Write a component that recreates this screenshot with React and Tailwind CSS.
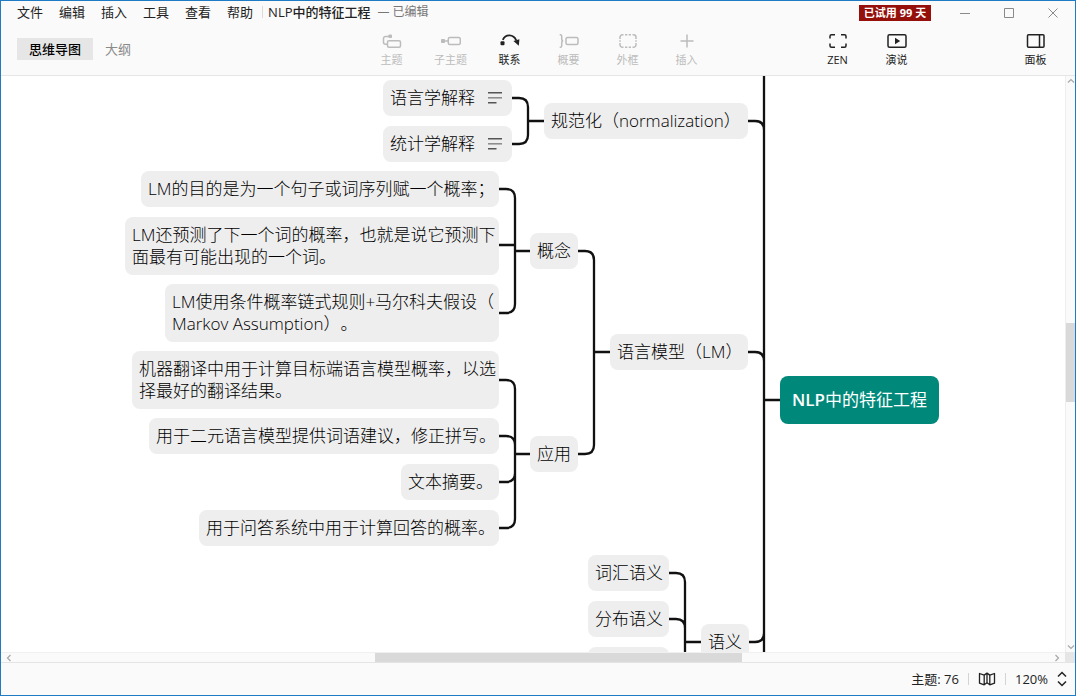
import React from 'react';
import clsx from 'clsx';

const menus = ['文件', '编辑', '插入', '工具', '查看', '帮助'];

const nodes = [
    { x: 382, y: 4, w: 129, text: '语言学解释', note: true },
    { x: 382, y: 50, w: 129, text: '统计学解释', note: true },
    { x: 543, y: 27, w: 204, text: '规范化（normalization）' },
    { x: 140, y: 95, w: 358, text: 'LM的目的是为一个句子或词序列赋一个概率；' },
    { x: 124, y: 141, w: 374, text: 'LM还预测了下一个词的概率，也就是说它预测下\n面最有可能出现的一个词。' },
    { x: 164, y: 208, w: 334, text: 'LM使用条件概率链式规则+马尔科夫假设（\nMarkov Assumption）。' },
    { x: 131, y: 275, w: 367, text: '机器翻译中用于计算目标端语言模型概率，以选\n择最好的翻译结果。' },
    { x: 148, y: 342, w: 350, text: '用于二元语言模型提供词语建议，修正拼写。' },
    { x: 400, y: 388, w: 98, text: '文本摘要。' },
    { x: 198, y: 434, w: 300, text: '用于问答系统中用于计算回答的概率。' },
    { x: 529, y: 157, w: 48, text: '概念' },
    { x: 529, y: 360, w: 48, text: '应用' },
    { x: 609, y: 258, w: 138, text: '语言模型（LM）' },
    { x: 587, y: 479, w: 81, text: '词汇语义' },
    { x: 587, y: 525, w: 81, text: '分布语义' },
    { x: 587, y: 571, w: 81, text: '' },
    { x: 700, y: 548, w: 48, text: '语义' },
];

// children end at `from`, join the vertical line at `mid` and reach the parent at `to`
const branches = [
    { from: 511, mid: 527, to: 543, y: 45, children: [22, 68] },
    { from: 498, mid: 514, to: 529, y: 175, children: [113, 169, 237] },
    { from: 498, mid: 514, to: 529, y: 378, children: [304, 360, 406, 452] },
    { from: 577, mid: 593, to: 609, y: 276, children: [175, 378] },
    { from: 668, mid: 684, to: 700, y: 566, children: [497, 543, 589] },
    { from: 747, mid: 763, to: 779, y: 324, children: [-60, 45, 276, 566, 640] },
];

const branchPath = ({ from, mid, to, y, children }) => {
    const lines = children.map((cy) => {
        const r = Math.abs(y - cy) < 8 ? 0 : 9;
        const dir = y > cy ? 1 : -1;
        // the lower topics of the trunk bend up, the upper ones bend down
        return `M${from} ${cy}H${mid - r}Q${mid} ${cy} ${mid} ${cy + r * dir}V${y}`;
    });
    return `${lines.join('')}M${mid} ${y}H${to}`;
};

const TopicIcon = () => (
    <>
        <path d="M5 11.2H3.5a2 2 0 0 1-2-2V5.5a2 2 0 0 1 2-2H7" />
        <rect x="6.5" y="1.5" width="3.5" height="3.5" rx="0.8" fill="currentColor" stroke="none" />
        <rect x="5.5" y="7.7" width="13" height="6.6" rx="1.5" />
    </>
);

const SubtopicIcon = () => (
    <>
        <rect x="0" y="6" width="4" height="4" rx="0.8" fill="currentColor" stroke="none" />
        <path d="M3 8h4.5" />
        <rect x="7.3" y="4.6" width="12" height="6.8" rx="1.5" />
    </>
);

const RelationIcon = () => (
    <>
        <rect x="0.5" y="8.3" width="4" height="4" rx="1" fill="currentColor" stroke="none" />
        <path d="M2.8 6.8C5.5.9 13.5.9 16.2 7.3" strokeWidth="1.8" />
        <path d="M13.4 8l6-1.8-.6 6.6z" fill="currentColor" stroke="none" />
    </>
);

const SummaryIcon = () => (
    <>
        <path d="M.7 1.7h.6q1.4 0 1.4 1.4v3q0 1.9 1.5 1.9Q2.7 8 2.7 9.9v3q0 1.4-1.4 1.4H.7" />
        <rect x="7" y="4.6" width="12" height="6.8" rx="1.5" />
    </>
);

const BoundaryIcon = () => (
    <>
        <path d="M2 6V4.2a2.5 2.5 0 0 1 2.5-2.5h1M14.5 1.7h1A2.5 2.5 0 0 1 18 4.2V6M18 10v1.8a2.5 2.5 0 0 1-2.5 2.5h-1M5.5 14.3h-1A2.5 2.5 0 0 1 2 11.8V10" />
        <path d="M7 1.7h2.3M10.7 1.7H13M7 14.3h2.3M10.7 14.3H13M2 7.2v1.6M18 7.2v1.6" />
    </>
);

const InsertIcon = () => <path d="M10 1.5v13M3.5 8h13" />;

const ZenIcon = () => (
    <path d="M2 5.5V3.2q0-1.5 1.5-1.5H7M13 1.7h3.5q1.5 0 1.5 1.5v2.3M18 10.5v2.3q0 1.5-1.5 1.5H13M7 14.3H3.5Q2 14.3 2 12.8v-2.3" />
);

const PlayIcon = () => (
    <>
        <rect x="1" y="1.7" width="18" height="12.6" rx="1.5" />
        <path d="M8 4.8l5.2 3.2L8 11.2z" fill="currentColor" stroke="none" />
    </>
);

const PanelIcon = () => (
    <>
        <rect x="1.5" y="1.7" width="16.500" height="12.6" rx="1" />
        <path d="M13.5 2v12" />
    </>
);

const ToolButton = ({ label, icon: Icon, disabled, className }) => (
    <button
        disabled={disabled}
        className={clsx(
            'flex w-[59px] flex-col items-center gap-[3px] pt-px',
            disabled ? 'text-[#bcbcbc]' : 'text-[#222222]',
            className
        )}
    >
        <svg viewBox="0 0 20 16" className="h-4 w-5" fill="none" stroke="currentColor" strokeWidth="1.5" aria-hidden="true">
            <Icon />
        </svg>
        <span className="text-[11px] leading-4">{label}</span>
    </button>
);

const Arrow = ({ d, label, className }) => (
    <button aria-label={label} className={clsx('flex shrink-0 items-center justify-center text-[#a8a8a8]', className)}>
        <svg viewBox="0 0 8 8" className="size-2" fill="none" stroke="currentColor" strokeWidth="1.2" aria-hidden="true">
            <path d={d} />
        </svg>
    </button>
);

const TitleBar = () => (
    <div className="flex h-6 items-center justify-between">
        <div className="flex items-center pb-0.5 pl-4 text-[13px] leading-5 text-[#222222]">
            <nav className="flex gap-4">
                {menus.map((item) => (
                    <button key={item}>{item}</button>
                ))}
            </nav>
            <span className="ml-[9px] h-3 w-px bg-[#dcdcdc]"></span>
            <h1 className="ml-[5px] font-medium">NLP中的特征工程</h1>
            <span className="ml-[7px] text-[12px] text-[#777777]">— 已编辑</span>
        </div>
        <div className="flex items-center">
            <button className="mr-3 w-[72px] bg-[#950f0b] text-center text-[11px] leading-4 font-bold text-white">
                已试用 99 天
            </button>
            {[
                ['最小化', 'M1 6.5h10'],
                ['最大化', 'M1.5 1.5h9v9h-9z'],
                ['关闭', 'M1.5 1.5l9 9M10.5 1.5l-9 9'],
            ].map(([label, d]) => (
                <button key={label} aria-label={label} className="flex h-6 w-11 items-center justify-center text-[#8a8a8a]">
                    <svg viewBox="0 0 12 12" className="size-3" fill="none" stroke="currentColor" aria-hidden="true">
                        <path d={d} />
                    </svg>
                </button>
            ))}
        </div>
    </div>
);

const Toolbar = () => (
    <div className="grid h-[50px] grid-cols-[1fr_auto_1fr] items-center">
        <div className="flex items-center pb-0.5 pl-4 text-[13px] leading-[22px]">
            <button className="bg-[#e6e6e6] px-3 font-medium text-black">思维导图</button>
            <button className="px-3 text-[#8a8a8a]">大纲</button>
        </div>
        <div className="flex pl-0.5">
            <ToolButton label="主题" icon={TopicIcon} disabled />
            <ToolButton label="子主题" icon={SubtopicIcon} disabled />
            <ToolButton label="联系" icon={RelationIcon} />
            <ToolButton label="概要" icon={SummaryIcon} disabled />
            <ToolButton label="外框" icon={BoundaryIcon} disabled />
            <ToolButton label="插入" icon={InsertIcon} disabled />
        </div>
        <div className="flex justify-end pr-[10px]">
            <ToolButton label="ZEN" icon={ZenIcon} />
            <ToolButton label="演说" icon={PlayIcon} className="mr-20" />
            <ToolButton label="面板" icon={PanelIcon} />
        </div>
    </div>
);

const MindMap = () => (
    <main className="relative min-w-0 flex-1 overflow-hidden bg-white font-['Open_Sans','Noto_Sans_CJK_SC',sans-serif] text-[17px] leading-[22px] font-light text-black [text-spacing-trim:space-all]">
        <svg className="absolute inset-0 size-full" fill="none" stroke="#111111" strokeWidth="2.3" aria-hidden="true">
            {branches.map((branch) => (
                <path key={`${branch.mid}-${branch.y}`} d={branchPath(branch)} />
            ))}
        </svg>
        {nodes.map((node) => (
            <div
                key={node.y}
                className="absolute flex min-h-9 items-center justify-between rounded-lg bg-[#eeeeee] px-[7px] py-[7px] whitespace-pre"
                style={{ left: node.x, top: node.y, width: node.w }}
            >
                {node.text}
                {node.note && (
                    <button aria-label="笔记" className="flex size-5 items-center justify-center">
                        <svg viewBox="0 0 16 12" className="h-3 w-4" fill="none" strokeWidth="1.5" aria-hidden="true">
                            <path d="M1 .8h14M1 10.8h8.500" stroke="#555555" />
                            <path d="M1 5.8h14" stroke="#888888" />
                        </svg>
                    </button>
                )}
            </div>
        ))}
        <div
            className="absolute flex h-12 items-center justify-center rounded-lg bg-[#00897b] whitespace-pre text-white"
            style={{ left: 779, top: 300, width: 159 }}
        >
            <span className="font-semibold">NLP</span>
            <span className="font-normal">中的特征工程</span>
        </div>
    </main>
);

const StatusBar = () => (
    <footer className="flex h-8 items-center justify-end gap-[9px] pr-2 text-[13px] leading-5 text-[#222222]">
        <span>主题: 76</span>
        <span className="h-3 w-px bg-[#d4d4d4]"></span>
        <button aria-label="导图">
            <svg viewBox="0 0 18 14" className="h-[14px] w-[18px]" fill="none" stroke="currentColor" strokeWidth="1.3" strokeLinejoin="round" aria-hidden="true">
                <path d="M1.5 1.5l4.700 1.600v9.700l-4.700-1.600zM6.200 3.100l2.800-2v9.700l-2.800 2M9 1.100l2.800 2v9.700L9 10.800M11.800 3.100l4.700-1.600v9.700l-4.700 1.600" />
            </svg>
        </button>
        <span className="h-3 w-px bg-[#d4d4d4]"></span>
        <button className="flex items-center gap-[9px]">
            120%
            <svg viewBox="0 0 10 16" className="h-4 w-[10px]" fill="none" stroke="currentColor" strokeWidth="1.5" aria-hidden="true">
                <path d="M1 5.5L5 1.5l4 4M1 10.5l4 4 4-4" />
            </svg>
        </button>
    </footer>
);

const App = () => {
    return (
        <div
            lang="zh-CN"
            className="flex h-screen flex-col border border-[#1f7bc4] bg-[#fafafa] font-['Open_Sans','Noto_Sans_CJK_SC',sans-serif]"
        >
            <header className="border-b border-[#e6e6e6]">
                <TitleBar />
                <Toolbar />
            </header>
            <div className="flex min-h-0 flex-1">
                <MindMap />
                {/* Vertical scrollbar */}
                <div className="flex w-[10px] flex-col border-l border-[#eeeeee]">
                    <Arrow label="向上滚动" d="M1 5.5l3-3 3 3" className="h-[10px]" />
                    <div className="grid flex-1 grid-rows-[237fr_79fr_240fr]">
                        <div className="row-start-2 bg-[#d9d9d9]"></div>
                    </div>
                    <Arrow label="向下滚动" d="M1 2.5l3 3 3-3" className="h-[10px]" />
                </div>
            </div>
            {/* Horizontal scrollbar */}
            <div className="flex h-[11px] border-b border-[#e4e4e4]">
                <div className="flex flex-1 border-t border-[#f0f0f0]">
                    <Arrow label="向左滚动" d="M5.5 1l-3 3 3 3" className="w-4" />
                    <div className="grid flex-1 grid-cols-[358fr_367fr_307fr]">
                        <div className="col-start-2 bg-[#d9d9d9]"></div>
                    </div>
                    <Arrow label="向右滚动" d="M2.5 1l3 3-3 3" className="w-4" />
                </div>
                <div className="w-[10px] bg-[#e6e6e6]"></div>
            </div>
            <StatusBar />
        </div>
    );
};

export default App;
